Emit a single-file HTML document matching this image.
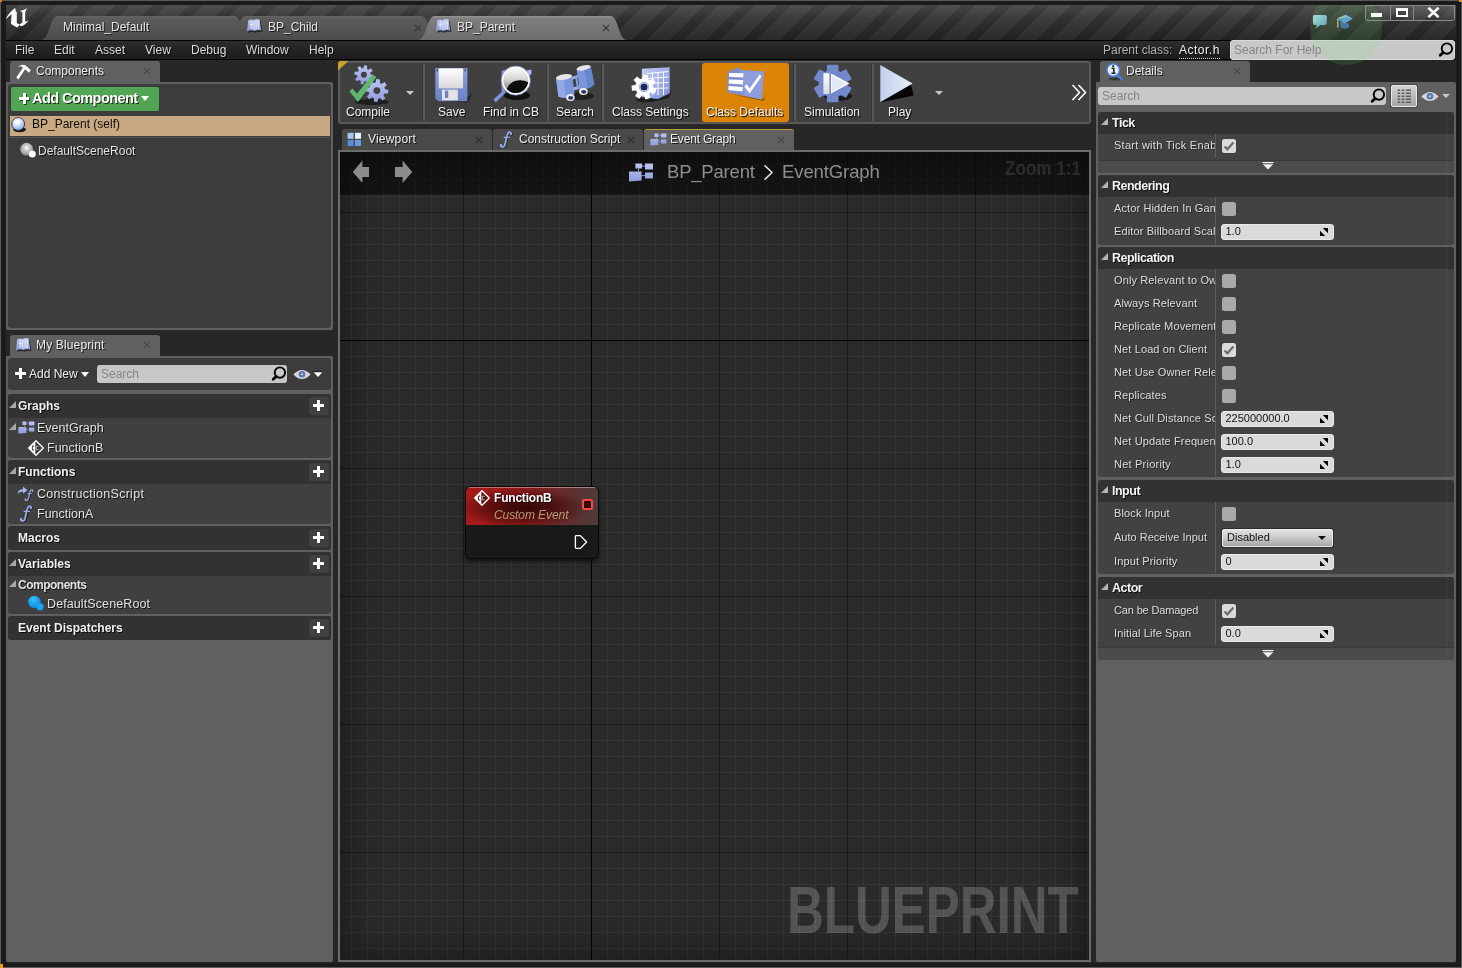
<!DOCTYPE html>
<html>
<head>
<meta charset="utf-8">
<title>BP_Parent</title>
<style>
*{box-sizing:border-box;margin:0;padding:0}
html,body{width:1462px;height:968px;overflow:hidden;background:#272727}
body{font-family:"Liberation Sans",sans-serif;font-size:12px;color:#e0e0e0;position:relative}
.abs{position:absolute}
.t{position:absolute;white-space:nowrap;line-height:14px;text-shadow:1px 1px 0 rgba(0,0,0,.75)}
.b{font-weight:bold}
.mtab{position:absolute;top:16px;height:24px}
.panel{position:absolute;background:#3f3f3f;border:2px solid #595959;border-radius:2px}
.ptab{position:absolute;height:22px;background:#5e5e5e;border-radius:3px 3px 0 0}
.ptab.in{background:#474747}
.x{position:absolute;color:#474747;font-size:11px;line-height:12px;text-shadow:none}

#frame{left:0;top:0;width:1462px;height:968px;border:1px solid #5a5a5a;pointer-events:none}
#frame2{left:1px;top:1px;width:1460px;height:966px;border:4px solid #1b1b1b;border-left-width:5px;border-right-width:5px;pointer-events:none}
#titlebar{left:1px;top:1px;width:1460px;height:39px;background:linear-gradient(rgba(255,255,255,.16),rgba(255,255,255,.03) 45%,rgba(0,0,0,.22)),repeating-linear-gradient(135deg,#363636 0,#363636 6.1px,#2a2a2a 6.1px,#2a2a2a 16.1px,#363636 16.1px,#363636 26px)}
#tbline{left:5px;top:40px;width:1452px;height:1px;background:#000}
#menubar{left:5px;top:40px;width:1452px;height:20px;background:linear-gradient(#2d2d2d,#232323 50%,#1d1d1d);border:1px solid #000}
.menu{top:43px;font-size:12px;color:#dcdcdc}
.tabtxt{top:20px;font-size:12px;color:#e4e4e4}

.pout{position:absolute;background:#606060}
.pin{position:absolute;background:#3c3c3c;border-radius:3px}
.ptab{position:absolute;height:22px;background:#606060;border-radius:3px 3px 0 0}
.sec{position:absolute;left:8px;width:323px;background:#404040;border-radius:3px;overflow:hidden}
.sec .hd{position:absolute;left:0;top:0;width:100%;height:24px;background:#323232}
.plus{position:absolute;left:301px;top:3px;width:20px;height:18px;background:#404040;border-radius:2px}
.plus:before{content:"";position:absolute;left:4px;top:7px;width:11px;height:3px;background:#fff}
.plus:after{content:"";position:absolute;left:8px;top:3px;width:3px;height:11px;background:#fff}
.tri{position:absolute;width:0;height:0;border-style:solid;border-width:0 0 7px 7px;border-color:transparent transparent #a8a8a8 transparent}
.dd{position:absolute;width:0;height:0;border-style:solid;border-width:5px 4.5px 0 4.5px;border-color:#fff transparent transparent transparent}
.sbox{position:absolute;background:#c8c8c8;border-radius:3px}
.ph{position:absolute;color:#858585;font-size:12px;line-height:14px;white-space:nowrap}
.row{font-size:12.5px;color:#e2e2e2}

#toolbar{left:338px;top:61px;width:753px;height:63px;background:#404040;border:2px solid #595959;border-radius:3px}
.sep{position:absolute;top:64px;width:3px;height:57px;background:#595959;border-left:1px solid #343434}
.tl{top:105px;font-size:12px;color:#f2f2f2;text-shadow:1px 1px 1px #000}
.gtab{position:absolute;top:129px;height:21px;background:#494949;border-radius:3px 3px 0 0}
.gtab.on{background:#606060;border-top:1px solid #b89b3a}
.gtt{top:132px;font-size:12px;color:#ececec}
.dd2{position:absolute;width:0;height:0;border-style:solid;border-width:4px 4px 0 4px;border-color:#c8c8c8 transparent transparent transparent}

.dsec{position:absolute;left:1098px;width:356px;background:#424242;border-radius:3px;overflow:hidden}
.dsec .hd{position:absolute;left:0;top:0;width:100%;height:22px;background:#323232}
.dsec .adv{position:absolute;left:0;bottom:0;width:100%;height:13px;background:#4b4b4b;border-top:1px solid #3a3a3a}
.dsec .vl{position:absolute;left:117px;top:22px;width:1px;background:#5c5c5c}
.dsec .vr{position:absolute;left:348px;top:0;width:1px;height:100%;background:rgba(255,255,255,.05)}
.dh{font-size:12.5px;line-height:16px;color:#f4f4f4;font-weight:bold;left:1112px;letter-spacing:-.5px}
.dl{font-size:11px;line-height:14px;color:#dedede;left:1114px;overflow:hidden;max-width:101px;letter-spacing:.12px;text-shadow:1px 1px 0 rgba(0,0,0,.45)}
.cb{position:absolute;left:1222px;width:14px;height:14px;border-radius:2.5px;background:#a9a9a9}
.cb.on{background:#dadada}
.spin{position:absolute;left:1221px;width:113px;height:16px;border-radius:3px;background:#dadada;border:1px solid #e9e9e9}
.spin span{position:absolute;left:3.5px;top:-1px;font-size:11px;line-height:14px;color:#111;text-shadow:none}
.tri2{position:absolute;width:0;height:0;border-style:solid;border-width:0 0 7px 7px;border-color:transparent transparent #b4b4b4 transparent}
/* graph */
#graph{left:338px;top:150px;width:753px;height:812px;border:2px solid #6c6c6c;background-color:#2a2a2a;overflow:hidden}
#grid{left:0;top:0;width:749px;height:808px;
background-image:
linear-gradient(#000,#000),linear-gradient(#000,#000),
linear-gradient(90deg,#1b1b1b 1px,transparent 1px),linear-gradient(#1b1b1b 1px,transparent 1px),
linear-gradient(90deg,#353535 1px,transparent 1px),linear-gradient(#353535 1px,transparent 1px);
background-size:1px 100%,100% 1px,128px 128px,128px 128px,16px 16px,16px 16px;
background-position:251px 0,0 188px,123px 60px,123px 60px,11px 12px,11px 12px;
background-repeat:no-repeat,no-repeat,repeat,repeat,repeat,repeat}
</style>
</head>
<body>
<div id="root" style="position:absolute;left:0;top:0;width:1462px;height:968px;will-change:transform">
<svg width="0" height="0" style="position:absolute">
<defs>
<linearGradient id="gBlue" x1="0" y1="0" x2="0" y2="1"><stop offset="0" stop-color="#bcc6f2"/><stop offset="1" stop-color="#8f9bdc"/></linearGradient>
<linearGradient id="gBlue2" x1="0" y1="0" x2="1" y2="1"><stop offset="0" stop-color="#c4d0f4"/><stop offset="1" stop-color="#7f90d8"/></linearGradient>
<linearGradient id="gPlay" x1="0" y1="0" x2="1" y2="0"><stop offset="0" stop-color="#c4cdee"/><stop offset="1" stop-color="#e6f0fa"/></linearGradient>
<linearGradient id="gFloppy" x1="0" y1="0" x2="0" y2="1"><stop offset="0" stop-color="#8a9ee0"/><stop offset="1" stop-color="#6a82c4"/></linearGradient>
<linearGradient id="gWhite" x1="0" y1="0" x2="0" y2="1"><stop offset="0" stop-color="#fff"/><stop offset="1" stop-color="#d8d8d8"/></linearGradient>
<radialGradient id="gSph" cx=".42" cy=".32" r=".7"><stop offset="0" stop-color="#fff"/><stop offset=".35" stop-color="#e6eeff"/><stop offset="1" stop-color="#7f9df0"/></radialGradient>
<radialGradient id="gSphG" cx=".5" cy=".4" r=".6"><stop offset="0" stop-color="#fff"/><stop offset=".4" stop-color="#c8c8c8"/><stop offset="1" stop-color="#8a8a8a"/></radialGradient>
<radialGradient id="gSphB" cx=".4" cy=".3" r=".7"><stop offset="0" stop-color="#38c4ff"/><stop offset="1" stop-color="#0a86d8"/></radialGradient>
<linearGradient id="gLens" x1="0" y1="0" x2="0" y2="1"><stop offset="0" stop-color="#fff"/><stop offset=".45" stop-color="#d4d4d4"/><stop offset="1" stop-color="#6a6a6a"/></linearGradient>
</defs></svg>
<div id="titlebar" class="abs"></div>
<svg class="abs" style="left:0;top:0" width="1462" height="41" viewBox="0 0 1462 41">
<defs>
<linearGradient id="tin" x1="0" y1="0" x2="0" y2="1"><stop offset="0" stop-color="#636363"/><stop offset=".12" stop-color="#5b5b5b"/><stop offset="1" stop-color="#4c4c4c"/></linearGradient>
<linearGradient id="tac" x1="0" y1="0" x2="0" y2="1"><stop offset="0" stop-color="#939393"/><stop offset=".12" stop-color="#7e7e7e"/><stop offset="1" stop-color="#6c6c6c"/></linearGradient>
</defs>
<path d="M41,40 C50,40 49,16 58,16 L234,16 C243,16 242,40 251,40 Z" fill="url(#tin)"/>
<path d="M229,40 C238,40 237,16 246,16 L421,16 C430,16 429,40 438,40 Z" fill="url(#tin)"/>
<path d="M418,40 C427,40 426,16 435,16 L610,16 C619,16 618,40 627,40 Z" fill="url(#tac)"/>
</svg>
<div id="tbline" class="abs"></div>
<div id="menubar" class="abs"></div>
<svg class="abs" style="left:4px;top:6px" width="26" height="23" viewBox="4 6 26 23"><path d="M5.4,19.6 C8,14.4 12,10 15.6,7.8 C15,10 15.6,11.4 16.8,12.2 L16.8,23 L19.4,24.6 L22.4,22.6 L22.4,12.6 L20,10.8 C23,10.2 25.2,9.2 27.2,7.9 C25.6,10.4 25.2,12 25.2,13.6 L25.2,21.4 C26.2,21.8 27.6,21 28.6,20 C27.2,23 24,25.6 21,26.2 L19.6,25 L17.2,27.4 L11,24 L11.6,14.2 C9.4,15.6 7.4,17.6 5.4,19.6 Z" fill="#fff"/></svg>
<svg class="abs" style="left:246px;top:18px" width="18" height="17" viewBox="0 0 18 17"><path d="M3.4,4 Q5.6,2.2 8.8,3.6 Q11.8,2 14.8,3.2 L16.4,14 Q12.8,13 9.8,14.8 Q6.2,13.2 2.2,14.8 Z" fill="#000" opacity=".55"/><path d="M2.2,2.4 Q4.4,0.6 7.6,2 Q10.6,0.4 13.6,1.6 L15.2,12.4 Q11.6,11.4 8.6,13 Q5,11.6 1,13.2 Z" fill="url(#gBlue)"/><path d="M5.2,3 V11 M7.2,3.4 V11.6 M9,2.6 V12 M10.8,2.6 V11.4 M12.4,2.8 V11.2 M3.8,6.6 H7" stroke="#fff" stroke-width=".8" opacity=".85"/></svg>
<svg class="abs" style="left:435px;top:18px" width="18" height="17" viewBox="0 0 18 17"><path d="M3.4,4 Q5.6,2.2 8.8,3.6 Q11.8,2 14.8,3.2 L16.4,14 Q12.8,13 9.8,14.8 Q6.2,13.2 2.2,14.8 Z" fill="#000" opacity=".55"/><path d="M2.2,2.4 Q4.4,0.6 7.6,2 Q10.6,0.4 13.6,1.6 L15.2,12.4 Q11.6,11.4 8.6,13 Q5,11.6 1,13.2 Z" fill="url(#gBlue)"/><path d="M5.2,3 V11 M7.2,3.4 V11.6 M9,2.6 V12 M10.8,2.6 V11.4 M12.4,2.8 V11.2 M3.8,6.6 H7" stroke="#fff" stroke-width=".8" opacity=".85"/></svg>
<svg class="abs" style="left:1312px;top:14px" width="17" height="16" viewBox="0 0 17 16"><defs><linearGradient id="gChat" x1="0" y1="0" x2="1" y2="1"><stop offset="0" stop-color="#a9dce6"/><stop offset="1" stop-color="#5f97c0"/></linearGradient></defs><path d="M2.4,1 H13 Q15,1 15,3 L14.6,9 Q14.4,11 12.4,11 L8,11.2 L3.6,14.8 L5,11.2 L2.8,11 Q1,10.8 1,9 L1,2.6 Q1,1 2.4,1 Z" fill="url(#gChat)"/></svg>
<svg class="abs" style="left:1336px;top:14px" width="18" height="17" viewBox="0 0 18 17"><path d="M4.2,8 L13,9.4 L13,13 Q9,16.4 4.6,13 Z" fill="#3f6ea6"/><path d="M1,4.4 L9.6,0.8 L16.8,4.8 L8.2,9.6 Z" fill="#5c9bd8"/><path d="M1,4.4 L9.6,0.8 L16.8,4.8 L9,3.4 Z" fill="#7db4e8"/><path d="M1.8,5 V13.6" stroke="#d8b070" stroke-width="1.4"/><path d="M3,3.8 L9,3" stroke="#e0c080" stroke-width=".8"/></svg>
<div class="abs" style="left:1365px;top:5px;width:90px;height:16px;border:1px solid #8a8a8a;border-radius:0 0 3px 3px;background:linear-gradient(rgba(255,255,255,.10),rgba(255,255,255,.02))"></div>
<div class="abs" style="left:1390px;top:6px;width:1px;height:14px;background:#8a8a8a"></div>
<div class="abs" style="left:1413px;top:6px;width:1px;height:14px;background:#8a8a8a"></div>
<div class="abs" style="left:1371px;top:13px;width:11px;height:4px;background:#fff"></div>
<div class="abs" style="left:1396px;top:8px;width:12px;height:9px;border:2px solid #fff;border-top-width:3px"></div>
<svg class="abs" style="left:1427px;top:7px" width="13" height="11" viewBox="0 0 13 11"><path d="M1.4,0.8 L11.6,10.2 M11.6,0.8 L1.4,10.2" stroke="#fff" stroke-width="2.6"/></svg>
<div class="t tabtxt" style="left:63px">Minimal_Default</div>
<div class="t tabtxt" style="left:268px">BP_Child</div>
<svg class="abs" style="left:414px;top:24px" width="8" height="8" viewBox="0 0 8 8"><path d="M0.8,0.8 L7.2,7.2 M7.2,0.8 L0.8,7.2" stroke="#383838" stroke-width="1.1" fill="none"/></svg>
<svg class="abs" style="left:602px;top:24px" width="8" height="8" viewBox="0 0 8 8"><path d="M0.8,0.8 L7.2,7.2 M7.2,0.8 L0.8,7.2" stroke="#333" stroke-width="1.1" fill="none"/></svg>
<div class="t tabtxt" style="left:457px">BP_Parent</div>
<div class="t menu" style="left:15px">File</div>
<div class="t menu" style="left:54px">Edit</div>
<div class="t menu" style="left:95px">Asset</div>
<div class="t menu" style="left:145px">View</div>
<div class="t menu" style="left:191px">Debug</div>
<div class="t menu" style="left:246px">Window</div>
<div class="t menu" style="left:309px">Help</div>

<div class="t" style="left:1103px;top:43px;color:#b4b4b4">Parent class:</div>
<div class="t" style="left:1179px;top:43px;color:#f0f0f0;border-bottom:1px dotted #ddd;line-height:15px;letter-spacing:.5px">Actor.h</div>
<div class="sbox" style="left:1230px;top:40px;width:225px;height:20px;border:1px solid #dadada"></div>
<div class="ph" style="left:1234px;top:43px">Search For Help</div>
<svg class="abs" style="left:1438px;top:42px" width="16" height="16" viewBox="0 0 16 16"><circle cx="8.9" cy="6.6" r="5.2" fill="none" stroke="#000" stroke-width="1.9"/><path d="M5.2,10.4 L2.2,13.2" stroke="#000" stroke-width="2.8" stroke-linecap="round"/></svg>

<!-- LEFT -->
<div id="left">
<!-- Components panel -->
<div class="ptab" style="left:10px;top:61px;width:150px"></div>
<div class="pout" style="left:6px;top:82px;width:327px;height:248px;border-radius:0 2px 2px 2px"></div>
<div class="pin" style="left:8px;top:84px;width:323px;height:244px"></div>
<svg class="abs" style="left:16px;top:64px" width="16" height="17" viewBox="16 64 16 17"><path d="M16.3,77.6 L18.4,79.6 L25.4,68.8 L23.4,67.2 Z" fill="#fff"/><path d="M18,66.2 L22.5,64.8 Q25.4,64.8 27.6,67.2 L30.8,70.2 L28.8,72.8 L26.6,70.6 Q24.8,69 23.2,68 L21.6,66.6 Z" fill="#fff"/></svg>
<div class="t" style="left:36px;top:64px;color:#ececec">Components</div>
<svg class="abs" style="left:143px;top:67px" width="8" height="8" viewBox="0 0 8 8"><path d="M0.8,0.8 L7.2,7.2 M7.2,0.8 L0.8,7.2" stroke="#474747" stroke-width="1.1" fill="none"/></svg>
<div class="abs" style="left:11px;top:87px;width:148px;height:24px;background:#52a552;border-radius:2px"></div>
<div class="abs" style="left:20px;top:98px;width:10px;height:3px;background:#111;opacity:.7"></div><div class="abs" style="left:24px;top:94px;width:3px;height:11px;background:#111;opacity:.7"></div><div class="abs" style="left:19px;top:97px;width:10px;height:3px;background:#fff"></div><div class="abs" style="left:23px;top:93px;width:3px;height:11px;background:#fff"></div>
<div class="t b" style="left:32px;top:89px;font-size:14.5px;line-height:18px;color:#fff;letter-spacing:-.55px">Add Component</div>
<div class="dd" style="left:141px;top:96px"></div>
<div class="abs" style="left:10px;top:116px;width:320px;height:20px;background:#c9a983"></div>
<div class="abs" style="left:10px;top:137px;width:320px;height:1px;background:#565656"></div>
<svg class="abs" style="left:10px;top:116px" width="18" height="18" viewBox="0 0 18 18"><ellipse cx="9.6" cy="13.6" rx="6.4" ry="2.6" fill="#000" opacity=".85"/><circle cx="8.2" cy="8" r="6.4" fill="url(#gSph)" stroke="#222" stroke-width=".8"/></svg>
<svg class="abs" style="left:19px;top:142px" width="18" height="17" viewBox="0 0 18 17"><circle cx="7.6" cy="7.2" r="6.4" fill="url(#gSphG)"/><circle cx="13.3" cy="12.1" r="3.5" fill="#fff"/></svg>
<div class="t" style="left:32px;top:117px;color:#0c0c0c;text-shadow:none">BP_Parent (self)</div>
<div class="t" style="left:38px;top:144px;color:#e2e2e2">DefaultSceneRoot</div>

<!-- My Blueprint panel -->
<div class="ptab" style="left:10px;top:335px;width:150px;height:21px"></div>
<div class="pout" style="left:6px;top:356px;width:327px;height:606px;border-radius:0 2px 2px 2px"></div>
<svg class="abs" style="left:15px;top:337px" width="18" height="17" viewBox="0 0 18 17"><path d="M3.4,4 Q5.6,2.2 8.8,3.6 Q11.8,2 14.8,3.2 L16.4,14 Q12.8,13 9.8,14.8 Q6.2,13.2 2.2,14.8 Z" fill="#000" opacity=".55"/><path d="M2.2,2.4 Q4.4,0.6 7.6,2 Q10.6,0.4 13.6,1.6 L15.2,12.4 Q11.6,11.4 8.6,13 Q5,11.6 1,13.2 Z" fill="url(#gBlue)"/><path d="M5.2,3 V11 M7.2,3.4 V11.6 M9,2.6 V12 M10.8,2.6 V11.4 M12.4,2.8 V11.2 M3.8,6.6 H7" stroke="#fff" stroke-width=".8" opacity=".85"/></svg>
<div class="t" style="left:36px;top:338px;color:#ececec;letter-spacing:.15px">My Blueprint</div>
<svg class="abs" style="left:143px;top:341px" width="8" height="8" viewBox="0 0 8 8"><path d="M0.8,0.8 L7.2,7.2 M7.2,0.8 L0.8,7.2" stroke="#474747" stroke-width="1.1" fill="none"/></svg>
<div class="pin" style="left:8px;top:358px;width:323px;height:32px"></div>
<div class="abs" style="left:15px;top:372px;width:11px;height:3px;background:#fff"></div>
<div class="abs" style="left:19px;top:368px;width:3px;height:11px;background:#fff"></div>
<div class="t" style="left:29px;top:367px;color:#f0f0f0">Add New</div>
<div class="dd" style="left:81px;top:372px"></div>
<div class="sbox" style="left:97px;top:365px;width:190px;height:18px"></div>
<div class="ph" style="left:101px;top:367px">Search</div>
<svg class="abs" style="left:271px;top:366px" width="16" height="16" viewBox="0 0 16 16"><circle cx="8.9" cy="6.6" r="5.2" fill="none" stroke="#000" stroke-width="1.9"/><path d="M5.2,10.4 L2.2,13.2" stroke="#000" stroke-width="2.8" stroke-linecap="round"/></svg>
<svg class="abs" style="left:293px;top:369px" width="18" height="11" viewBox="0 0 18 11"><path d="M0.4,5.5 Q9,-3.6 17.6,5.5 Q9,14.6 0.4,5.5 Z" fill="#d6d6d6"/><circle cx="9" cy="5.3" r="3.3" fill="#5878ae"/><circle cx="9" cy="5.2" r="1" fill="#dfe4ee"/></svg>
<svg class="abs" style="left:313px;top:371px" width="10" height="7" viewBox="0 0 10 7"><path d="M0.4,0.4 H9.4 V1.4 H0.4 Z" fill="#000" opacity=".8"/><path d="M0.6,1.2 H9.4 L5,6 Z" fill="#fff"/></svg>


<div class="sec" style="top:394px;height:64px"><div class="hd"></div><div class="plus"></div></div>
<div class="tri" style="left:9px;top:401px"></div>
<div class="t b" style="left:18px;top:399px;color:#f0f0f0">Graphs</div>
<div class="tri" style="left:9px;top:423px"></div>
<svg class="abs" style="left:18px;top:421px" width="17" height="13" viewBox="0 0 17 13"><path d="M4.4,0.4 H8.4 V4 H4.4 Z M11,0.4 H16.4 V4.4 H11 Z M11,6.4 H16.4 V10.4 H11 Z M0.4,6 H8.4 V12 L0.4,12.6 Z" fill="url(#gBlue)"/><path d="M6.4,4 V6 M8.4,2.2 H11 M8.4,8.6 H11" stroke="#8a98d4" stroke-width=".7"/></svg>
<svg class="abs" style="left:28px;top:440px" width="16" height="16" viewBox="0 0 16 16"><path d="M8,0.7 L15.3,8 L8,15.3 L0.7,8 Z" fill="#3c3c3c" stroke="#fff" stroke-width="1.3" stroke-linejoin="round"/><path d="M7.3,1.2 L0.6,8 L7.3,14.8 Z" fill="#fff"/><path d="M6.2,6 H4.4 V10 H6.2" stroke="#3c3c3c" stroke-width="1" fill="none"/><path d="M10.6,6.3 H8.2 V9.7 H10.6" stroke="#b4b4b4" stroke-width="1" fill="none"/></svg>
<div class="t row" style="left:37px;top:421px">EventGraph</div>
<div class="t row" style="left:47px;top:441px">FunctionB</div>

<div class="sec" style="top:460px;height:64px"><div class="hd"></div><div class="plus"></div></div>
<div class="tri" style="left:9px;top:467px"></div>
<div class="t b" style="left:18px;top:465px;color:#f0f0f0">Functions</div>
<svg class="abs" style="left:17px;top:486px" width="11" height="9" viewBox="0 0 11 9"><path d="M0.6,8 Q1,3.4 6,3.2 V0.6 L10.4,4.2 L6,7.6 V5.4 Q2.6,5.2 0.6,8 Z" fill="#a9b7ee"/></svg>
<svg class="abs" style="left:24px;top:489px" width="10.5" height="12.6" viewBox="0 0 15 18"><g transform="translate(1,1)" opacity=".5"><path d="M12.4,2.8 C12.6,1.2 10.8,0.6 9.6,2 C8.6,3.2 8.2,5 7.8,7 L6.2,14 C5.7,16.2 4,17 2.6,16.2 C1.6,15.6 1.6,14.6 2.2,14.4" stroke="#000" stroke-width="1.8" fill="none" stroke-linecap="round"/></g><path d="M12.4,2.8 C12.6,1.2 10.8,0.6 9.6,2 C8.6,3.2 8.2,5 7.8,7 L6.2,14 C5.7,16.2 4,17 2.6,16.2 C1.6,15.6 1.6,14.6 2.2,14.4" stroke="#99a8ec" stroke-width="1.8" fill="none" stroke-linecap="round"/><path d="M4.8,6.6 H11.2" stroke="#99a8ec" stroke-width="1.3"/><circle cx="12.2" cy="3" r="1.2" fill="#99a8ec"/><circle cx="2.3" cy="14.7" r="1.2" fill="#99a8ec"/></svg>
<svg class="abs" style="left:18.5px;top:505px" width="14.5" height="17.4" viewBox="0 0 15 18"><g transform="translate(1,1)" opacity=".5"><path d="M12.4,2.8 C12.6,1.2 10.8,0.6 9.6,2 C8.6,3.2 8.2,5 7.8,7 L6.2,14 C5.7,16.2 4,17 2.6,16.2 C1.6,15.6 1.6,14.6 2.2,14.4" stroke="#000" stroke-width="1.8" fill="none" stroke-linecap="round"/></g><path d="M12.4,2.8 C12.6,1.2 10.8,0.6 9.6,2 C8.6,3.2 8.2,5 7.8,7 L6.2,14 C5.7,16.2 4,17 2.6,16.2 C1.6,15.6 1.6,14.6 2.2,14.4" stroke="#99a8ec" stroke-width="1.8" fill="none" stroke-linecap="round"/><path d="M4.8,6.6 H11.2" stroke="#99a8ec" stroke-width="1.3"/><circle cx="12.2" cy="3" r="1.2" fill="#99a8ec"/><circle cx="2.3" cy="14.7" r="1.2" fill="#99a8ec"/></svg>
<div class="t row" style="left:37px;top:487px;letter-spacing:.28px">ConstructionScript</div>
<div class="t row" style="left:37px;top:507px">FunctionA</div>

<div class="sec" style="top:526px;height:24px"><div class="hd"></div><div class="plus"></div></div>
<div class="t b" style="left:18px;top:531px;color:#f0f0f0">Macros</div>

<div class="sec" style="top:552px;height:62px"><div class="hd"></div><div class="plus"></div></div>
<div class="tri" style="left:9px;top:559px"></div>
<div class="t b" style="left:18px;top:557px;color:#f0f0f0">Variables</div>
<div class="tri" style="left:9px;top:580px"></div>
<div class="t b" style="left:18px;top:578px;color:#e2e2e2;letter-spacing:-.5px">Components</div>
<svg class="abs" style="left:27px;top:595px" width="18" height="17" viewBox="0 0 18 17"><circle cx="7.4" cy="7" r="6.2" fill="url(#gSphB)"/><circle cx="13" cy="11.8" r="3.6" fill="#1aa2f4"/></svg>
<div class="t row" style="left:47px;top:597px;letter-spacing:.1px">DefaultSceneRoot</div>

<div class="sec" style="top:616px;height:24px"><div class="hd"></div><div class="plus"></div></div>
<div class="t b" style="left:18px;top:621px;color:#f0f0f0">Event Dispatchers</div>
</div>

<!-- CENTER -->
<div id="center">
<div id="toolbar" class="abs"></div>
<div class="abs" style="left:338px;top:61px;width:12px;height:12px;border-radius:3px 0 0 0;overflow:hidden"><svg width="12" height="12" style="position:absolute;left:0;top:0"><path d="M0,0 L10.5,0 L0,9.5 Z" fill="#c9a328"/></svg></div>
<div class="abs" style="left:702px;top:63px;width:87px;height:59px;background:#dc8505;border-radius:3px"></div>
<div class="sep" style="left:422px"></div>
<div class="sep" style="left:546px"></div>
<div class="sep" style="left:601px"></div>
<div class="sep" style="left:793px"></div>
<div class="sep" style="left:871px"></div>
<svg class="abs" style="left:348px;top:62px" width="46" height="44" viewBox="0 0 46 44">
<ellipse cx="24" cy="40" rx="17" ry="3" fill="#000" opacity=".55"/>
<path d="M22.7,12.4 L25.5,13.1 L24.9,16.2 L22.0,15.8 L21.0,17.3 L22.4,19.8 L19.8,21.6 L18.1,19.2 L16.3,19.6 L15.6,22.4 L12.5,21.8 L12.9,18.9 L11.4,17.9 L8.9,19.3 L7.1,16.7 L9.5,15.0 L9.1,13.2 L6.3,12.5 L6.9,9.4 L9.8,9.8 L10.8,8.3 L9.4,5.8 L12.0,4.0 L13.7,6.4 L15.5,6.0 L16.2,3.2 L19.3,3.8 L18.9,6.7 L20.4,7.7 L22.9,6.3 L24.7,8.9 L22.3,10.6 Z" fill="url(#gBlue)"/><circle cx="15.9" cy="12.8" r="3" fill="#404040"/>
<path d="M37.0,27.3 L40.4,27.9 L40.0,31.6 L36.6,31.5 L35.5,33.4 L37.5,36.2 L34.6,38.6 L32.3,36.1 L30.2,36.7 L29.6,40.1 L25.9,39.7 L26.0,36.3 L24.1,35.2 L21.3,37.2 L18.9,34.3 L21.4,32.0 L20.8,29.9 L17.4,29.3 L17.8,25.6 L21.2,25.7 L22.3,23.8 L20.3,21.0 L23.2,18.6 L25.5,21.1 L27.6,20.5 L28.2,17.1 L31.9,17.5 L31.8,20.9 L33.7,22.0 L36.5,20.0 L38.9,22.9 L36.4,25.2 Z" fill="url(#gBlue)"/><circle cx="28.9" cy="28.6" r="3.4" fill="#404040"/>
<path d="M1.6,29.6 L4.4,26.6 L9,31.8 L24.4,12.6 L28.4,15 L10,40 Z" fill="#5cb96e"/>
</svg>
<svg class="abs" style="left:434px;top:66px" width="38" height="40" viewBox="0 0 38 40">
<path d="M4,35 L34,31 L38,27 L34,36.5 Z" fill="#000" opacity=".5"/>
<path d="M1.3,2.2 H33.4 V35.2 H4.2 L1.3,32.6 Z" fill="url(#gFloppy)"/>
<rect x="4.7" y="2.4" width="24.3" height="20" fill="url(#gWhite)"/>
<rect x="8" y="23.7" width="15.8" height="10.6" fill="#e4e4e4"/>
<rect x="10.9" y="24.6" width="3.3" height="7.3" fill="#6a82c4"/>
<rect x="2.6" y="3.6" width="1.2" height="1.6" fill="#223"/><rect x="30.6" y="3.6" width="1.2" height="1.6" fill="#223"/>
</svg>
<svg class="abs" style="left:490px;top:62px" width="46" height="44" viewBox="0 0 46 44">
<ellipse cx="27" cy="33.5" rx="13" ry="4.6" fill="#000" opacity=".75"/>
<path d="M11.6,9 L15,7.6 L15,29 L11.6,29.6 Z" fill="#8195da"/><path d="M37,8.6 L41.4,7.4 L41.4,12.6 L37,13 Z" fill="#aebcf0"/>
<path d="M3.4,37.6 L13.6,28 L15.8,30.4 L5.8,40.4 Z" fill="#7d92d8"/>
<circle cx="25.8" cy="18.6" r="13.4" fill="url(#gLens)"/>
<path d="M16.6,28.2 C19,19.5 28,15.6 38.6,20.4 C38.4,26 33,32 25.8,32 C22,32 18.6,30.6 16.6,28.2 Z" fill="#0c0c0c"/>
<circle cx="25.8" cy="18.6" r="13.4" fill="none" stroke="#fdfdff" stroke-width="1.9"/>
<circle cx="25.8" cy="18.6" r="14.6" fill="none" stroke="#8a9ee0" stroke-width=".8"/>
</svg>
<svg class="abs" style="left:554px;top:64px" width="42" height="40" viewBox="0 0 42 40">
<ellipse cx="27" cy="32" rx="13" ry="4" fill="#000" opacity=".5"/>
<path d="M2.2,15 L18.4,12.4 L20.6,30 Q12,36 4.4,32.6 Z" fill="#7b97dc"/>
<path d="M2.2,15 L10,13.8 L11.6,33.8 Q7,34 4.4,32.6 Z" fill="#90aae8"/>
<ellipse cx="10" cy="13" rx="8.2" ry="2.7" fill="#e6e6e6" transform="rotate(-9 10 13)"/>
<path d="M22.6,5.8 L36.6,2.6 L40.4,20.6 Q34,26.6 25.6,24 Z" fill="#7b97dc"/>
<path d="M30,4.2 L36.6,2.6 L40.4,20.6 Q37,24 33.6,24.6 Z" fill="#6886cc"/>
<ellipse cx="29.6" cy="3.8" rx="7.2" ry="2.4" fill="#e6e6e6" transform="rotate(-13 29.6 3.8)"/>
<path d="M17.6,13 L23.6,11 L24.2,13.6 L18,15.8 Z M19,23.6 L26,21.6 L26.4,24.4 L19.6,26.4 Z" fill="#9ab0ea"/>
<path d="M21,12 L22.8,11.4 L25,24 L23,24.6 Z" fill="#88a0e0"/>
<path d="M11.4,28.6 L18.4,26.6 L19.6,32.6 L13,34.8 Z M24.4,22.6 L31,20.6 L32.6,26.6 L26,28.6 Z" fill="#7b97dc"/>
<ellipse cx="16.4" cy="33.4" rx="4.3" ry="3.5" fill="#ececec"/><ellipse cx="16.7" cy="33.8" rx="2.6" ry="1.9" fill="#26386c"/>
<ellipse cx="29.4" cy="27.4" rx="4.3" ry="3.5" fill="#ececec"/><ellipse cx="29.7" cy="27.8" rx="2.6" ry="1.9" fill="#26386c"/>
</svg>
<svg class="abs" style="left:628px;top:62px" width="46" height="44" viewBox="0 0 46 44">
<path d="M22,38 L40,33 L44,28 L41,36 L24,40 Z" fill="#000" opacity=".5"/>
<path d="M13.8,6.8 L41.6,5.2 L41.8,31 L30,37 L13.8,35 Z" fill="url(#gBlue2)"/>
<path d="M19,11.5 L40.5,9.5 M19,16.5 L40.5,15 M19,21.5 L40.5,20.5 M19,26.5 L40,26 M24.5,11 V33 M30,10.5 V33 M35.5,10 V33" stroke="#fff" stroke-width="1" fill="none" opacity=".9"/>
<ellipse cx="17" cy="38" rx="9" ry="2.4" fill="#000" opacity=".45"/>
<path d="M24.8,25.3 L28.5,26.8 L26.7,31.7 L22.9,30.4 L21.2,32.1 L22.4,35.9 L17.5,37.5 L16.1,33.8 L13.7,33.5 L11.5,36.8 L7.1,34.0 L9.2,30.5 L7.9,28.5 L4.0,28.8 L3.5,23.6 L7.4,23.1 L8.2,20.9 L5.5,18.0 L9.2,14.4 L12.1,17.1 L14.4,16.4 L15.0,12.4 L20.1,13.1 L19.7,17.0 L21.7,18.3 L25.2,16.4 L27.9,20.8 L24.6,23.0 Z" fill="#fff"/><circle cx="16" cy="25" r="3.6" fill="#1c2a5c"/><circle cx="16" cy="25" r="4.6" fill="none" stroke="#9fb4ea" stroke-width="1.2"/>
</svg>
<svg class="abs" style="left:724px;top:64px" width="46" height="40" viewBox="0 0 46 40">
<path d="M6,30 L40,37 L43,27 L40,35 Z" fill="#000" opacity=".35"/>
<path d="M3.4,7.2 L9,6.6 L10.4,4.2 L15.4,3.8 L16.8,6 L39.8,7.4 L37.8,35.4 L3,28.2 Z" fill="#7f8fd0"/>
<path d="M16.8,6 L39.8,7.4 L37.8,35.4 L20,31.6 Z" fill="#8e9ddc"/>
<path d="M5.2,9 L19.4,9.2 L19.2,13.4 L5,12.8 Z M4.9,15.4 L19.1,16 L18.9,20.4 L4.7,19.4 Z M4.6,22 L18.8,23 L18.6,27.4 L4.4,26 Z" fill="#fff"/>
<path d="M20.4,22.4 L22.6,20.2 L25.6,24.4 L35.6,10.6 L37.6,12.2 L25.6,29.4 Z" fill="#fff"/>
</svg>
<svg class="abs" style="left:812px;top:62px" width="44" height="44" viewBox="0 0 44 44">
<ellipse cx="26" cy="34" rx="14" ry="5" fill="#000" opacity=".6"/>
<path d="M33.6,23.3 L38.5,26.3 L33.7,34.5 L28.7,31.8 L25.6,33.5 L25.5,39.3 L15.9,39.3 L15.8,33.5 L12.7,31.8 L7.7,34.5 L2.9,26.3 L7.8,23.3 L7.8,19.7 L2.9,16.7 L7.7,8.5 L12.7,11.2 L15.8,9.5 L15.9,3.7 L25.5,3.7 L25.6,9.5 L28.7,11.2 L33.7,8.5 L38.5,16.7 L33.6,19.7 Z" fill="#7389cc" stroke="#7389cc" stroke-width="2" stroke-linejoin="round"/>
<rect x="11.4" y="11.2" width="6" height="20.8" fill="url(#gWhite)"/>
<path d="M19,11.6 L37.6,21.5 L19,31.6 Z" fill="#fff"/><path d="M20,14 L35,21.5 L20,29.5 Z" fill="#dfe8f6"/>
</svg>
<svg class="abs" style="left:878px;top:62px" width="40" height="44" viewBox="0 0 40 44">
<path d="M2.4,40.6 L33,22.6 L35.6,33.4 Z" fill="#000" opacity=".9"/>
<path d="M2.3,2.9 L34.6,21.5 L2.3,40.1 Z" fill="url(#gPlay)"/>
</svg>
<div class="t tl" style="left:346px">Compile</div>
<div class="t tl" style="left:438px">Save</div>
<div class="t tl" style="left:483px">Find in CB</div>
<div class="t tl" style="left:556px">Search</div>
<div class="t tl" style="left:612px">Class Settings</div>
<div class="t tl" style="left:706px">Class Defaults</div>
<div class="t tl" style="left:804px">Simulation</div>
<div class="t tl" style="left:888px">Play</div>
<div class="dd2" style="left:406px;top:91px"></div>
<div class="dd2" style="left:935px;top:91px"></div>
<svg class="abs" style="left:1070px;top:83px" width="20" height="20" viewBox="0 0 20 20"><path d="M2.5,2 L9.5,9.5 L2.5,17 M8.5,2 L15.5,9.5 L8.5,17" fill="none" stroke="#fff" stroke-width="1.6"/></svg>

<div class="gtab" style="left:342px;width:150px"></div>
<div class="gtab" style="left:493px;width:150px"></div>
<div class="gtab on" style="left:644px;width:150px"></div>
<svg class="abs" style="left:347px;top:132px" width="15" height="15" viewBox="0 0 15 15"><rect x="0.6" y="0.8" width="6" height="6" fill="#a6c6ee"/><rect x="8" y="0.8" width="6" height="6" fill="#e6f2fc"/><rect x="0.6" y="8" width="6" height="6" fill="#5a8ad8"/><rect x="8" y="8" width="6" height="6" fill="#6c9ae2"/></svg>
<svg class="abs" style="left:498.5px;top:131px" width="14.5" height="17.4" viewBox="0 0 15 18"><g transform="translate(1,1)" opacity=".5"><path d="M12.4,2.8 C12.6,1.2 10.8,0.6 9.6,2 C8.6,3.2 8.2,5 7.8,7 L6.2,14 C5.7,16.2 4,17 2.6,16.2 C1.6,15.6 1.6,14.6 2.2,14.4" stroke="#000" stroke-width="1.8" fill="none" stroke-linecap="round"/></g><path d="M12.4,2.8 C12.6,1.2 10.8,0.6 9.6,2 C8.6,3.2 8.2,5 7.8,7 L6.2,14 C5.7,16.2 4,17 2.6,16.2 C1.6,15.6 1.6,14.6 2.2,14.4" stroke="#99a8ec" stroke-width="1.8" fill="none" stroke-linecap="round"/><path d="M4.8,6.6 H11.2" stroke="#99a8ec" stroke-width="1.3"/><circle cx="12.2" cy="3" r="1.2" fill="#99a8ec"/><circle cx="2.3" cy="14.7" r="1.2" fill="#99a8ec"/></svg>
<svg class="abs" style="left:650px;top:133px" width="17" height="13" viewBox="0 0 17 13"><path d="M4.4,0.4 H8.4 V4 H4.4 Z M11,0.4 H16.4 V4.4 H11 Z M11,6.4 H16.4 V10.4 H11 Z M0.4,6 H8.4 V12 L0.4,12.6 Z" fill="url(#gBlue)"/><path d="M6.4,4 V6 M8.4,2.2 H11 M8.4,8.6 H11" stroke="#8a98d4" stroke-width=".7"/></svg>
<div class="t gtt" style="left:368px;letter-spacing:.2px">Viewport</div>
<div class="t gtt" style="left:519px">Construction Script</div>
<div class="t gtt" style="left:670px;letter-spacing:-.18px">Event Graph</div>
<svg class="abs" style="left:475px;top:136px" width="8" height="8" viewBox="0 0 8 8"><path d="M0.8,0.8 L7.2,7.2 M7.2,0.8 L0.8,7.2" stroke="#2d2d2d" stroke-width="1.1" fill="none"/></svg>
<svg class="abs" style="left:627px;top:136px" width="8" height="8" viewBox="0 0 8 8"><path d="M0.8,0.8 L7.2,7.2 M7.2,0.8 L0.8,7.2" stroke="#2d2d2d" stroke-width="1.1" fill="none"/></svg>
<svg class="abs" style="left:777px;top:136px" width="8" height="8" viewBox="0 0 8 8"><path d="M0.8,0.8 L7.2,7.2 M7.2,0.8 L0.8,7.2" stroke="#474747" stroke-width="1.1" fill="none"/></svg>

<div id="graph" class="abs"><div id="grid" class="abs"></div>
<div class="abs" style="left:0;top:0;width:749px;height:808px;box-shadow:inset 0 0 38px 4px rgba(0,0,0,.42)"></div>
<div class="abs" style="left:0;top:0;width:749px;height:43px;background:linear-gradient(rgba(0,0,0,.57),rgba(0,0,0,.55) 96%,rgba(0,0,0,.3))"></div>
</div>
<svg class="abs" style="left:352px;top:160px" width="18" height="24" viewBox="0 0 18 24"><path d="M0.8,12 L10.4,0.6 L10.4,7 L17,7 L17,17 L10.4,17 L10.4,23 Z" fill="#8c8c8c"/></svg>
<svg class="abs" style="left:394px;top:160px" width="19" height="24" viewBox="0 0 19 24"><path d="M18.2,12 L8.6,0.6 L8.6,7 L1,7 L1,17 L8.6,17 L8.6,23 Z" fill="#8c8c8c"/></svg>
<svg class="abs" style="left:628px;top:162px" width="26" height="20" viewBox="0 0 26 20"><path d="M7.4,1.6 H14 V6.6 H7.4 Z M17,1.6 H25 V7.6 H17 Z M17,10.4 H25 V16.6 H17 Z M1,9.6 H13.6 V18.6 L1,19.4 Z" fill="url(#gBlue)"/><path d="M10.5,6.6 V9.6 M14,4.2 H17 M13.6,13.6 H17" stroke="#8f9cd6" stroke-width="1"/></svg>
<svg class="abs" style="left:763px;top:164px" width="11" height="17" viewBox="0 0 11 17"><path d="M1.6,1.4 L9,8.5 L1.6,15.6" fill="none" stroke="#e4e4e4" stroke-width="1.5"/></svg>
<!-- node -->
<div class="abs" style="left:465px;top:486px;width:134px;height:73px;border-radius:6px;background:#0a0a0a;box-shadow:0 3px 5px rgba(0,0,0,.55)"></div>
<div class="abs" style="left:466px;top:487px;width:132px;height:71px;border-radius:5px;background:#181a18;overflow:hidden">
<div class="abs" style="left:0;top:0;width:132px;height:38px;background:radial-gradient(ellipse 66px 20px at 58px 21px,rgba(44,5,5,.92),rgba(60,8,8,.6) 55%,rgba(60,8,8,0) 100%),linear-gradient(90deg,#a81a1a 0,#8e1a1a 45%,#5e3030 80%,#4e3c3c 100%)"></div>
<div class="abs" style="left:0;top:0;width:132px;height:1px;background:linear-gradient(90deg,#c86a6a,#b87a7a 70%,#9a8a8a)"></div>
</div>
<svg class="abs" style="left:474px;top:490px" width="16" height="16" viewBox="0 0 16 16"><path d="M8,0.7 L15.3,8 L8,15.3 L0.7,8 Z" fill="#5c1414" stroke="#fff" stroke-width="1.3" stroke-linejoin="round"/><path d="M7.3,1.2 L0.6,8 L7.3,14.8 Z" fill="#fff"/><path d="M6.2,6 H4.4 V10 H6.2" stroke="#5c1414" stroke-width="1" fill="none"/><path d="M10.6,6.3 H8.2 V9.7 H10.6" stroke="#b4b4b4" stroke-width="1" fill="none"/></svg>
<div class="t b" style="left:494px;top:491px;color:#fff;letter-spacing:-.2px">FunctionB</div>
<div class="t" style="left:494px;top:508px;color:#b39a74;font-style:italic;text-shadow:none;letter-spacing:-.08px">Custom Event</div>
<div class="abs" style="left:582px;top:499px;width:11px;height:11px;border:2px solid #ff4545;border-radius:2.5px;background:#2c0808"></div>
<svg class="abs" style="left:574px;top:534px" width="15" height="16" viewBox="0 0 15 16"><path d="M2.2,1.6 H6.4 L12.6,8 L6.4,14.4 H2.2 Q1.4,14.4 1.4,13.6 V2.4 Q1.4,1.6 2.2,1.6 Z" fill="none" stroke="#fff" stroke-width="1.3" stroke-linejoin="round"/></svg>
<div class="t" style="left:667px;top:161px;font-size:18.5px;line-height:22px;color:#8e8e8e;text-shadow:none;letter-spacing:-.2px">BP_Parent</div>
<div class="t" style="left:782px;top:161px;font-size:18.5px;line-height:22px;color:#8e8e8e;text-shadow:none;letter-spacing:-.1px">EventGraph</div>
<div class="t b" style="left:1005px;top:156px;font-size:20.5px;line-height:24px;color:rgba(255,255,255,.115);text-shadow:none;transform-origin:0 0;transform:scaleX(.835)">Zoom 1:1</div>
<div class="t b" id="wm" style="left:787px;top:872px;font-size:66px;line-height:76px;color:rgba(255,255,255,.2);text-shadow:none;transform-origin:0 0;transform:scaleX(.772)">BLUEPRINT</div>
</div>

<!-- RIGHT -->
<div id="right">
<div class="ptab" style="left:1100px;top:61px;width:150px;height:21px"></div>
<div class="pout" style="left:1096px;top:82px;width:360px;height:880px;border-radius:0 2px 2px 2px"></div>
<svg class="abs" style="left:1105px;top:62px" width="20" height="20" viewBox="0 0 20 20"><ellipse cx="10" cy="17" rx="6" ry="1.6" fill="#000" opacity=".4"/><path d="M11.6,12.4 L17,17.6" stroke="#4a7ee0" stroke-width="2.2" stroke-linecap="round"/><circle cx="8.2" cy="8" r="6.3" fill="#e8eefa" stroke="#4a7ee0" stroke-width="1.5"/><path d="M6.6,6.2 H8.8 V11 M6.4,11.2 H10.6" stroke="#222" stroke-width="1.5" fill="none"/><circle cx="8.2" cy="4" r="1.1" fill="#222"/></svg>
<div class="t" style="left:1126px;top:64px;color:#ececec">Details</div>
<svg class="abs" style="left:1233px;top:67px" width="8" height="8" viewBox="0 0 8 8"><path d="M0.8,0.8 L7.2,7.2 M7.2,0.8 L0.8,7.2" stroke="#474747" stroke-width="1.1" fill="none"/></svg>
<div class="sbox" style="left:1098px;top:87px;width:288px;height:18px"></div>
<div class="ph" style="left:1102px;top:89px">Search</div>
<div class="abs" style="left:1391px;top:85px;width:26px;height:22px;border-radius:2px;border:1px solid #e8e8e8;background:linear-gradient(#d4d4d4,#a4a4a4);box-shadow:0 0 0 1px #4a4a4a"></div>
<svg class="abs" style="left:1370px;top:88px" width="16" height="16" viewBox="0 0 16 16"><circle cx="8.9" cy="6.6" r="5.2" fill="none" stroke="#000" stroke-width="1.9"/><path d="M5.2,10.4 L2.2,13.2" stroke="#000" stroke-width="2.8" stroke-linecap="round"/></svg>
<svg class="abs" style="left:1397px;top:89px" width="15" height="15" viewBox="0 0 15 15"><path d="M0.6,0.6 H3.2 V2 H0.6 Z M4.6,0.6 H7.4 V2 H4.6 Z M8.8,0.6 H14 V2 H8.8 Z M0.6,3.6 H3.2 V5 H0.6 Z M4.6,3.6 H7.4 V5 H4.6 Z M8.8,3.6 H14 V5 H8.8 Z M0.6,6.6 H3.2 V8 H0.6 Z M4.6,6.6 H7.4 V8 H4.6 Z M8.8,6.6 H14 V8 H8.8 Z M0.6,9.6 H3.2 V11 H0.6 Z M4.6,9.6 H7.4 V11 H4.6 Z M8.8,9.6 H14 V11 H8.8 Z M0.6,12.6 H3.2 V14 H0.6 Z M4.6,12.6 H7.4 V14 H4.6 Z M8.8,12.6 H14 V14 H8.8 Z" fill="#5c5c5c"/></svg>
<svg class="abs" style="left:1421px;top:91px" width="18" height="11" viewBox="0 0 18 11"><path d="M0.4,5.5 Q9,-3.6 17.6,5.5 Q9,14.6 0.4,5.5 Z" fill="#d6d6d6"/><circle cx="9" cy="5.3" r="3.3" fill="#5878ae"/><circle cx="9" cy="5.2" r="1" fill="#dfe4ee"/></svg>
<div class="dd2" style="left:1442px;top:94px"></div>
<div class="dsec" style="top:112px;height:61px"><div class="hd"></div><div class="vl" style="height:24px"></div><div class="adv"></div><div class="vr"></div></div>
<div class="tri2" style="left:1101px;top:118px"></div>
<div class="t dh" style="top:115px">Tick</div>
<div class="t dl" style="top:138px;letter-spacing:.27px">Start with Tick Enabled</div>
<div class="cb on" style="top:139px"><svg width="14" height="14" viewBox="0 0 14 14" style="position:absolute;left:0;top:0"><path d="M2.6,7.4 L5.4,10.3 L11.4,3.6" fill="none" stroke="#6c6c6c" stroke-width="2.2"/></svg></div>
<svg class="abs" style="left:1262px;top:162px" width="12" height="8" viewBox="0 0 12 8"><path d="M0.5,0 H11.5 V1.2 H0.5 Z M0.8,2.2 H11.2 L6,7.6 Z" fill="#f0f0f0"/></svg>
<div class="dsec" style="top:175px;height:70px"><div class="hd"></div><div class="vl" style="height:47px"></div><div class="vr"></div></div>
<div class="tri2" style="left:1101px;top:181px"></div>
<div class="t dh" style="top:178px">Rendering</div>
<div class="t dl" style="top:201px">Actor Hidden In Game</div>
<div class="cb" style="top:202px"></div>
<div class="t dl" style="top:224px">Editor Billboard Scale</div>
<div class="spin" style="top:224px"><span>1.0</span><svg width="10" height="10" viewBox="0 0 10 10" style="position:absolute;left:97px;top:2px"><path d="M3.8,1 H9 V6.2 Z M1,3.8 V9 H6.2 Z" fill="#000"/></svg></div>
<div class="dsec" style="top:247px;height:230px"><div class="hd"></div><div class="vl" style="height:207px"></div><div class="vr"></div></div>
<div class="tri2" style="left:1101px;top:253px"></div>
<div class="t dh" style="top:250px">Replication</div>
<div class="t dl" style="top:273px">Only Relevant to Owner</div>
<div class="cb" style="top:274px"></div>
<div class="t dl" style="top:296px">Always Relevant</div>
<div class="cb" style="top:297px"></div>
<div class="t dl" style="top:319px">Replicate Movement</div>
<div class="cb" style="top:320px"></div>
<div class="t dl" style="top:342px">Net Load on Client</div>
<div class="cb on" style="top:343px"><svg width="14" height="14" viewBox="0 0 14 14" style="position:absolute;left:0;top:0"><path d="M2.6,7.4 L5.4,10.3 L11.4,3.6" fill="none" stroke="#6c6c6c" stroke-width="2.2"/></svg></div>
<div class="t dl" style="top:365px">Net Use Owner Relevancy</div>
<div class="cb" style="top:366px"></div>
<div class="t dl" style="top:388px">Replicates</div>
<div class="cb" style="top:389px"></div>
<div class="t dl" style="top:411px">Net Cull Distance Squared</div>
<div class="t dl" style="top:434px">Net Update Frequency</div>
<div class="t dl" style="top:457px;letter-spacing:.22px">Net Priority</div>
<div class="spin" style="top:411px"><span>225000000.0</span><svg width="10" height="10" viewBox="0 0 10 10" style="position:absolute;left:97px;top:2px"><path d="M3.8,1 H9 V6.2 Z M1,3.8 V9 H6.2 Z" fill="#000"/></svg></div>
<div class="spin" style="top:434px"><span>100.0</span><svg width="10" height="10" viewBox="0 0 10 10" style="position:absolute;left:97px;top:2px"><path d="M3.8,1 H9 V6.2 Z M1,3.8 V9 H6.2 Z" fill="#000"/></svg></div>
<div class="spin" style="top:457px"><span>1.0</span><svg width="10" height="10" viewBox="0 0 10 10" style="position:absolute;left:97px;top:2px"><path d="M3.8,1 H9 V6.2 Z M1,3.8 V9 H6.2 Z" fill="#000"/></svg></div>
<div class="dsec" style="top:480px;height:94px"><div class="hd"></div><div class="vl" style="height:71px"></div><div class="vr"></div></div>
<div class="tri2" style="left:1101px;top:486px"></div>
<div class="t dh" style="top:483px">Input</div>
<div class="t dl" style="top:506px">Block Input</div>
<div class="cb" style="top:507px"></div>
<div class="t dl" style="top:530px;letter-spacing:0">Auto Receive Input</div>
<div class="t dl" style="top:554px">Input Priority</div>
<div class="spin" style="top:554px"><span>0</span><svg width="10" height="10" viewBox="0 0 10 10" style="position:absolute;left:97px;top:2px"><path d="M3.8,1 H9 V6.2 Z M1,3.8 V9 H6.2 Z" fill="#000"/></svg></div>
<div class="abs" style="left:1222px;top:529px;width:111px;height:18px;border-radius:2px;border:1px solid #ececec;background:linear-gradient(#e2e2e2,#c6c6c6 55%,#a6a6a6);box-shadow:0 0 0 1px #2c2c2c"></div>
<div class="t" style="left:1227px;top:530px;font-size:11px;color:#111;text-shadow:none">Disabled</div>
<div class="dd2" style="left:1317.5px;top:536px;border-top-color:#111;border-width:4.6px 4.6px 0 4.6px"></div>
<div class="dsec" style="top:577px;height:83px"><div class="hd"></div><div class="vl" style="height:46px"></div><div class="adv"></div><div class="vr"></div></div>
<div class="tri2" style="left:1101px;top:583px"></div>
<div class="t dh" style="top:580px">Actor</div>
<div class="t dl" style="top:603px;letter-spacing:-.15px">Can be Damaged</div>
<div class="cb on" style="top:604px"><svg width="14" height="14" viewBox="0 0 14 14" style="position:absolute;left:0;top:0"><path d="M2.6,7.4 L5.4,10.3 L11.4,3.6" fill="none" stroke="#6c6c6c" stroke-width="2.2"/></svg></div>
<div class="t dl" style="top:626px">Initial Life Span</div>
<div class="spin" style="top:626px"><span>0.0</span><svg width="10" height="10" viewBox="0 0 10 10" style="position:absolute;left:97px;top:2px"><path d="M3.8,1 H9 V6.2 Z M1,3.8 V9 H6.2 Z" fill="#000"/></svg></div>
<svg class="abs" style="left:1262px;top:650px" width="12" height="8" viewBox="0 0 12 8"><path d="M0.5,0 H11.5 V1.2 H0.5 Z M0.8,2.2 H11.2 L6,7.6 Z" fill="#f0f0f0"/></svg>
</div>
<div class="abs" style="left:1310px;top:-7px;width:72px;height:72px;border-radius:36px;background:radial-gradient(circle,rgba(110,230,110,.10) 0,rgba(110,230,110,.15) 94%,rgba(110,230,110,0) 100%)"></div>
<div id="frame2" class="abs"></div>
<div id="frame" class="abs"></div>
<div class="abs" style="left:0;top:0;width:2px;height:2px;background:#c58a10"></div><div class="abs" style="left:0;top:964px;width:3px;height:4px;background:#f39c12"></div><div class="abs" style="left:1459px;top:0;width:3px;height:2px;background:#e09a10"></div>
</div>
</body>
</html>
